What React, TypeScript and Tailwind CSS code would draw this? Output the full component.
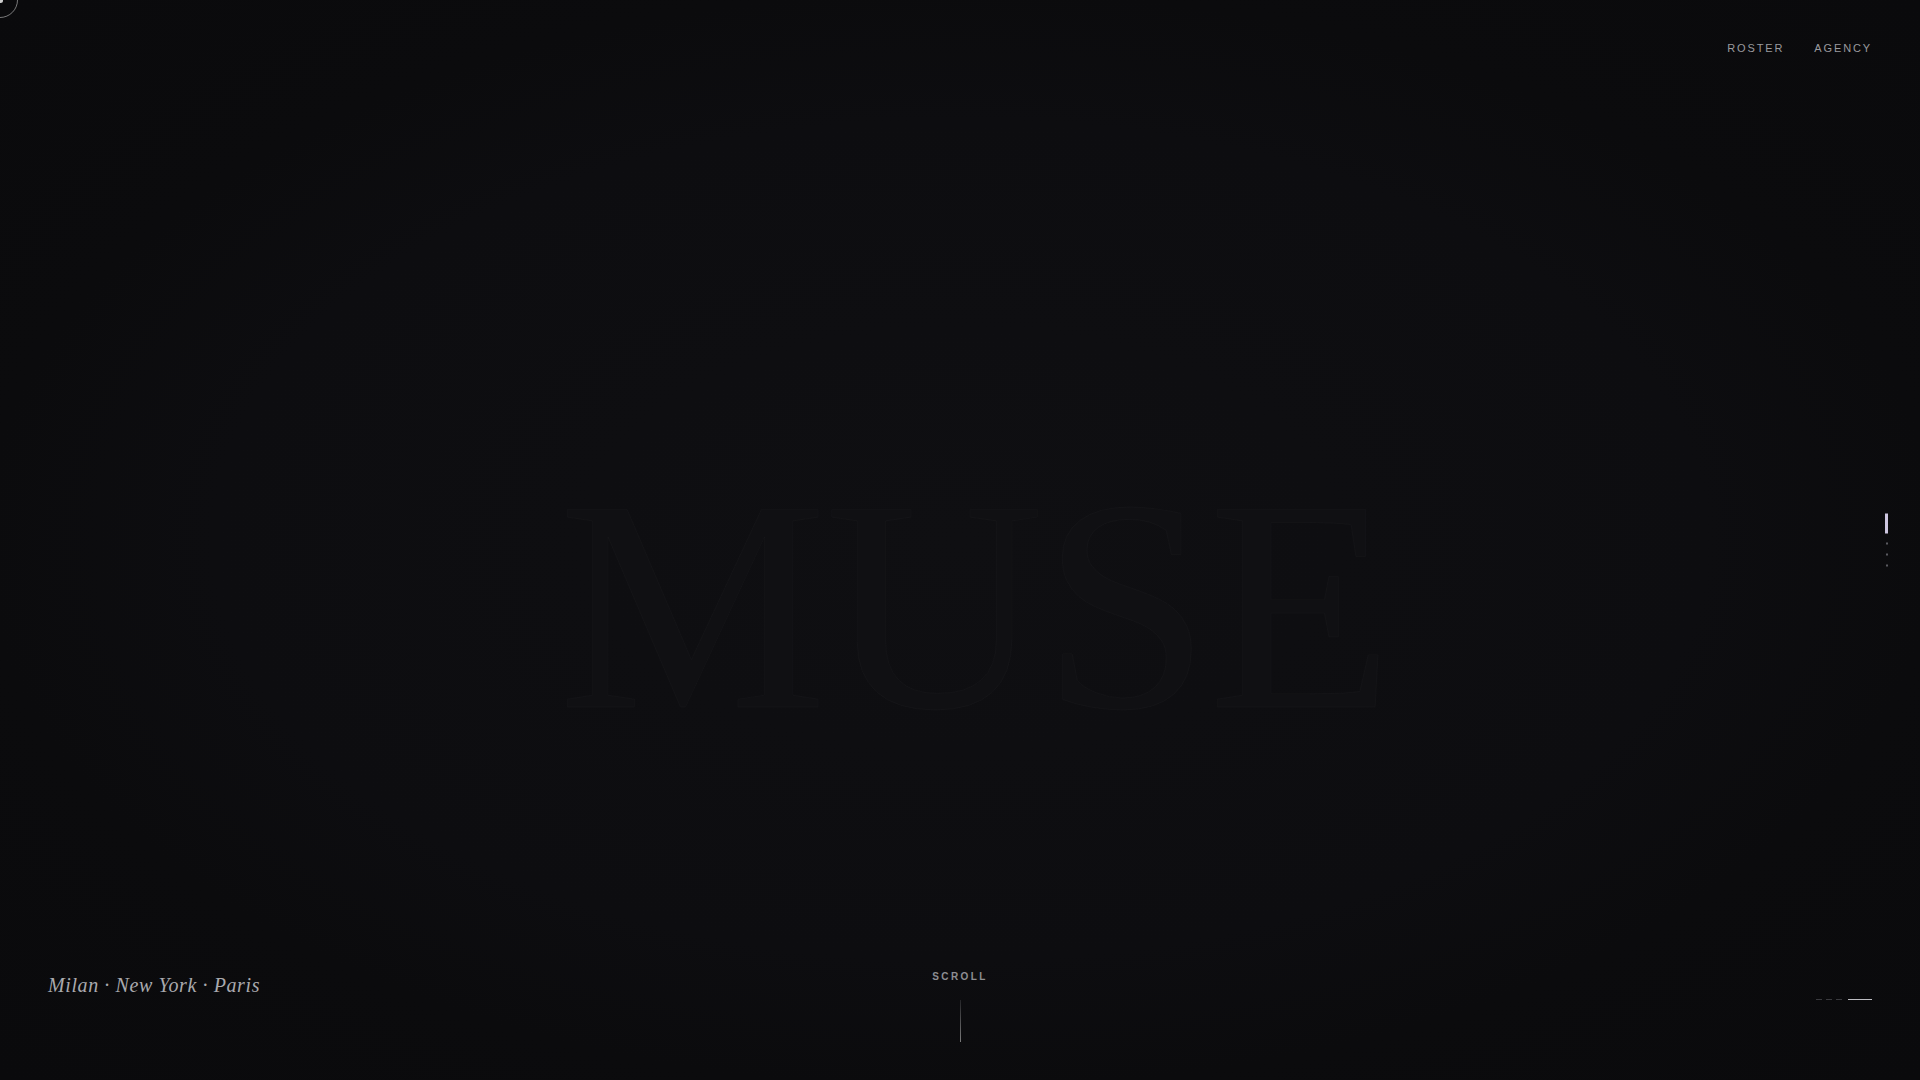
import React from "react";

const sans = "font-['Liberation_Sans',Arial,sans-serif]";
const serif = "font-['Liberation_Serif','Times_New_Roman',serif]";

const navLinks = ["Roster", "Agency"];
const sections = [true, false, false, false];

function CursorRing() {
  return (
    <div className="pointer-events-none absolute left-0 top-0 z-50" aria-hidden>
      <div className="absolute -left-[18px] -top-[18px] h-9 w-9 rounded-full border border-white/45" />
      <div className="absolute -left-[2px] -top-[2px] h-[5px] w-[5px] rounded-full bg-white/80" />
    </div>
  );
}

function SectionDots() {
  return (
    <div className="absolute right-8 top-1/2 flex -translate-y-1/2 flex-col items-center gap-[9px]">
      {sections.map((active, i) =>
        active ? (
          <span key={i} className="block h-5 w-[3px] bg-[#cdc6e0]" />
        ) : (
          <span key={i} className="block h-[2px] w-[2px] bg-[#5a5a60]" />
        ),
      )}
    </div>
  );
}

export default function App() {
  return (
    <div className="relative flex h-screen w-full flex-col overflow-hidden bg-[#0b0b0d] bg-[radial-gradient(ellipse_at_center,#0f0f12_0%,#0d0d10_55%,#0b0b0d_72%,#0a0a0c_100%)]">
      {/* watermark */}
      <div className="pointer-events-none absolute inset-0 flex items-center justify-center pl-[30px] pt-[130px]" aria-hidden>
        <h1
          className={`${serif} select-none text-[302px] leading-none tracking-[-0.005em] text-[#101013] [-webkit-text-stroke:1px_rgba(255,255,255,0.022)]`}
        >
          MUSE
        </h1>
      </div>

      <CursorRing />

      <header className="relative flex h-24 items-center justify-end gap-[30px] px-12">
        {navLinks.map((l) => (
          <a
            key={l}
            href="#"
            className={`${sans} text-[11px] uppercase tracking-[0.17em] text-[#9a9a9e] hover:text-white`}
          >
            {l}
          </a>
        ))}
      </header>

      <main className="flex-1" />

      <SectionDots />

      <footer className="relative grid grid-cols-3 items-end px-12 pb-[38px]">
        <p className={`${serif} mb-[43px] text-[20px] italic leading-7 tracking-[0.03em] text-[#a9a9ad]`}>
          Milan · New York · Paris
        </p>

        <div className="flex flex-col items-center gap-[17px]">
          <span className={`${sans} text-[10px] font-bold uppercase leading-3 tracking-[0.24em] text-[#8e8e92]`}>
            Scroll
          </span>
          <span className="block h-[42px] w-px bg-gradient-to-b from-white/10 to-white/45" />
        </div>

        <div className="mb-[42px] flex items-center justify-end gap-1">
          <span className="block h-px w-[6px] bg-[#3a3a3e]" />
          <span className="block h-px w-[6px] bg-[#3a3a3e]" />
          <span className="block h-px w-[6px] bg-[#3a3a3e]" />
          <span className="ml-[2px] block h-px w-6 bg-[#bdbdc2]" />
        </div>
      </footer>
    </div>
  );
}
